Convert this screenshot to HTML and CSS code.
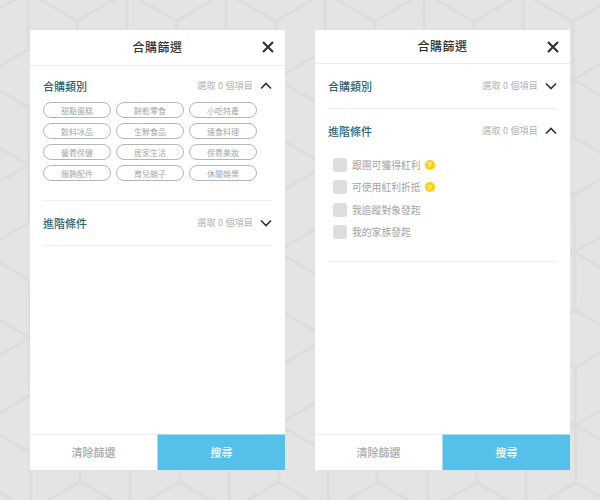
FILE: index.html
```html
<!DOCTYPE html>
<html lang="zh-Hant">
<head>
<meta charset="utf-8">
<title>合購篩選</title>
<link rel="stylesheet" href="styles.css">
</head>
<body>
<svg class="backdrop" width="600" height="500" aria-hidden="true">
  <defs>
    <pattern id="hex" width="99.1" height="172.8" patternUnits="userSpaceOnUse" patternTransform="matrix(1 0.002 0.0065 1 27.6 -8)">
      <path class="hex-line" d="M49.55 28.8V144M49.55 28.8L0 0M49.55 28.8L99.1 0M49.55 144L0 172.8M49.55 144L99.1 172.8M49.55 86.4L0 57.6M49.55 86.4L0 115.2M49.55 86.4L99.1 57.6M49.55 86.4L99.1 115.2M0 0V57.6M99.1 0V57.6M0 115.2V172.8M99.1 115.2V172.8"/>
    </pattern>
  </defs>
  <rect width="600" height="500" fill="url(#hex)"/>
</svg>

<section class="panel">
  <header class="panel-head">
    <h1 class="panel-title">合購篩選</h1>
    <svg class="close" width="12" height="12" viewBox="0 0 12 12"><path d="M1 1L11 11M11 1L1 11"/></svg>
  </header>
  <div class="panel-body">
    <div class="group group-chips">
      <div class="group-head">
        <h2 class="group-title">合購類別</h2>
        <span class="group-count">選取 0 個項目</span>
        <svg class="chevron" width="12" height="8" viewBox="0 0 12 8"><path d="M1 6.5L6 1.5L11 6.5"/></svg>
      </div>
      <div class="chips">
        <span class="chip">甜點蛋糕</span><span class="chip">餅乾零食</span><span class="chip">小吃特產</span>
        <span class="chip">飲料冰品</span><span class="chip">生鮮食品</span><span class="chip">速食料理</span>
        <span class="chip">營養保健</span><span class="chip">居家生活</span><span class="chip">保養美妝</span>
        <span class="chip">服飾配件</span><span class="chip">育兒親子</span><span class="chip">休閒娛樂</span>
      </div>
    </div>
    <div class="group">
      <div class="group-head">
        <h2 class="group-title">進階條件</h2>
        <span class="group-count">選取 0 個項目</span>
        <svg class="chevron" width="12" height="8" viewBox="0 0 12 8"><path d="M1 1.5L6 6.5L11 1.5"/></svg>
      </div>
    </div>
  </div>
  <footer class="panel-foot">
    <button class="btn btn-clear">清除篩選</button>
    <button class="btn btn-search">搜尋</button>
  </footer>
</section>

<section class="panel panel-alt">
  <header class="panel-head">
    <h1 class="panel-title">合購篩選</h1>
    <svg class="close" width="12" height="12" viewBox="0 0 12 12"><path d="M1 1L11 11M11 1L1 11"/></svg>
  </header>
  <div class="panel-body">
    <div class="group">
      <div class="group-head">
        <h2 class="group-title">合購類別</h2>
        <span class="group-count">選取 0 個項目</span>
        <svg class="chevron" width="12" height="8" viewBox="0 0 12 8"><path d="M1 1.5L6 6.5L11 1.5"/></svg>
      </div>
    </div>
    <div class="group">
      <div class="group-head">
        <h2 class="group-title">進階條件</h2>
        <span class="group-count">選取 0 個項目</span>
        <svg class="chevron" width="12" height="8" viewBox="0 0 12 8"><path d="M1 6.5L6 1.5L11 6.5"/></svg>
      </div>
      <ul class="checks">
        <li class="check"><span class="box"></span>跟團可獲得紅利<span class="help">?</span></li>
        <li class="check"><span class="box"></span>可使用紅利折抵<span class="help">?</span></li>
        <li class="check"><span class="box"></span>我追蹤對象發起</li>
        <li class="check"><span class="box"></span>我的家族發起</li>
      </ul>
    </div>
  </div>
  <footer class="panel-foot">
    <button class="btn btn-clear">清除篩選</button>
    <button class="btn btn-search">搜尋</button>
  </footer>
</section>
</body>
</html>
```
FILE: styles.css
```css
* { box-sizing: border-box; }
html, body { margin: 0; height: 100%; }
body {
  position: relative;
  width: 600px;
  height: 500px;
  overflow: hidden;
  padding: 30px;
  display: flex;
  gap: 30px;
  background: #e4e4e4;
  font-family: "Noto Sans CJK TC", "Noto Sans", sans-serif;
}
.backdrop { position: absolute; left: 0; top: 0; }
.hex-line { fill: none; stroke: #dcdcdc; stroke-width: 3; }

.panel {
  position: relative;
  width: 255px;
  height: 440px;
  background: #fff;
  display: flex;
  flex-direction: column;
}
.panel-head {
  height: 36px;
  flex: none;
  display: flex;
  align-items: center;
  justify-content: center;
  border-bottom: 1px solid #ececec;
  padding-bottom: 2px;
  position: relative;
}
.panel-alt .panel-head { height: 34px; }
.panel-title {
  margin: 0;
  font-size: 12px;
  font-weight: 500;
  letter-spacing: 0.5px;
  color: #333;
}
.close {
  position: absolute;
  right: 11px;
  top: 11px;
}
.panel-alt .close { top: 11px; }
.close path { fill: none; stroke: #333; stroke-width: 2.2; }

.panel-body {
  flex: 1;
  padding: 0 13px;
}
.group { border-bottom: 1px solid #eeeeee; }
.group-head {
  height: 44px;
  display: flex;
  align-items: center;
  padding-bottom: 1px;
}
.group-chips .group-head { height: 40px; }
.group-title {
  margin: 0;
  flex: 1;
  font-size: 11px;
  font-weight: 500;
  color: #2f6376;
}
.group-count {
  font-size: 9px;
  letter-spacing: 0.2px;
  color: #b0b0b0;
  margin-right: 7px;
}
.chevron { flex: none; }
.chevron path { fill: none; stroke: #333; stroke-width: 1.7; }

.chips {
  display: grid;
  grid-template-columns: repeat(3, 68px);
  column-gap: 5px;
  row-gap: 5px;
  margin-top: -4px;
  padding-bottom: 19px;
}
.chip {
  height: 16px;
  border: 1px solid #b5b5b5;
  border-radius: 8px;
  display: flex;
  align-items: center;
  justify-content: center;
  font-size: 8px;
  color: #a6a6a6;
}
.checks {
  list-style: none;
  margin: 0;
  padding: 0.5px 0 17.5px 5px;
}
.check {
  height: 22.5px;
  display: flex;
  align-items: center;
  font-size: 9.8px;
  color: #a3a3a3;
}
.box {
  width: 14px;
  height: 14px;
  border-radius: 3px;
  background: #dedede;
  margin-right: 5px;
  flex: none;
}
.help {
  width: 10px;
  height: 10px;
  border-radius: 50%;
  background: #ffcf00;
  color: #fff;
  font-family: "Liberation Sans", sans-serif;
  font-size: 8px;
  font-weight: 700;
  display: flex;
  align-items: center;
  justify-content: center;
  margin-left: 4px;
}
.panel-foot {
  height: 36px;
  flex: none;
  display: flex;
}
.btn {
  flex: 1;
  border: 0;
  padding: 0 0 2px;
  font-family: inherit;
  font-size: 11px;
  font-weight: 500;
  cursor: pointer;
}
.btn-clear {
  background: #fff;
  color: #aaa;
  border-top: 1px solid #eee;
}
.btn-search {
  background: #55c1ea;
  color: #fff;
  border-top: 1px solid #a6def3;
  border-left: 1px solid #a6def3;
}
```
